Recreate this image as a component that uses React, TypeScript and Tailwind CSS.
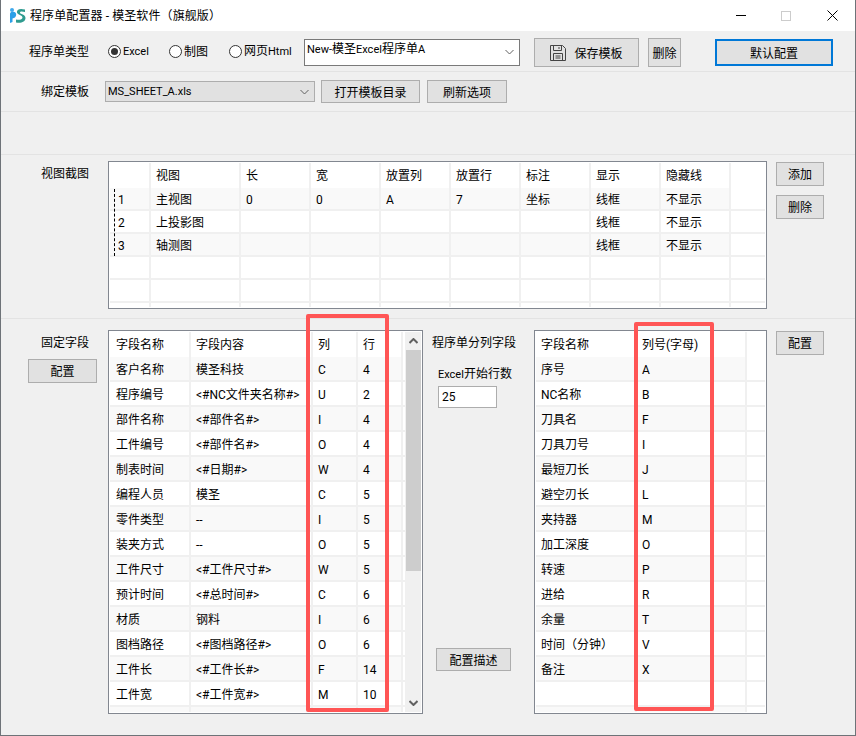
import React from "react";

const font = { fontFamily: 'Roboto, "Noto Sans CJK SC", sans-serif' };

function Btn({ className, children, edge = "border border-[#adadad]" }: { className: string; children: React.ReactNode; edge?: string }) {
  return (
    <div className={"flex items-center justify-center shrink-0 pt-[2px] bg-[#e1e1e1] text-[12px] text-black " + edge + " " + className}>
      {children}
    </div>
  );
}

function Chevron({ className = "", bold = false }: { className?: string; bold?: boolean }) {
  return (
    <svg width="9" height="6" viewBox="0 0 9 6" className={className}>
      <path d="M0.5 1 L4.5 5 L8.5 1" fill="none" stroke="#606060" strokeWidth={bold ? 2 : 1} />
    </svg>
  );
}

function Lat({ children }: { children: React.ReactNode }) {
  return <span className="text-[11px]">{children}</span>;
}

function Radio({ checked, label, width }: { checked?: boolean; label: React.ReactNode; width: string }) {
  return (
    <div className={"flex items-center h-[27px] gap-[2px] shrink-0 " + width}>
      <div className="w-[13px] h-[13px] rounded-full border border-[#333] bg-white flex items-center justify-center shrink-0">
        {checked && <div className="w-[7px] h-[7px] rounded-full bg-[#333]" />}
      </div>
      <span className="text-[12px] text-black whitespace-nowrap">{label}</span>
    </div>
  );
}

const viewRows = [
  ["1", "主视图", "0", "0", "A", "7", "坐标", "线框", "不显示"],
  ["2", "上投影图", "", "", "", "", "", "线框", "不显示"],
  ["3", "轴测图", "", "", "", "", "", "线框", "不显示"],
  ["", "", "", "", "", "", "", "", ""],
  ["", "", "", "", "", "", "", "", ""],
];
const viewHead = ["", "视图", "长", "宽", "放置列", "放置行", "标注", "显示", "隐藏线"];
const viewWidths = ["w-[41px]", "w-[90px]", "w-[70px]", "w-[70px]", "w-[70px]", "w-[70px]", "w-[70px]", "w-[70px]", "w-[70px]"];

const fixedRows = [
  ["客户名称", "模圣科技", "C", "4"],
  ["程序编号", "<#NC文件夹名称#>", "U", "2"],
  ["部件名称", "<#部件名#>", "I", "4"],
  ["工件编号", "<#部件名#>", "O", "4"],
  ["制表时间", "<#日期#>", "W", "4"],
  ["编程人员", "模圣", "C", "5"],
  ["零件类型", "--", "I", "5"],
  ["装夹方式", "--", "O", "5"],
  ["工件尺寸", "<#工件尺寸#>", "W", "5"],
  ["预计时间", "<#总时间#>", "C", "6"],
  ["材质", "钢料", "I", "6"],
  ["图档路径", "<#图档路径#>", "O", "6"],
  ["工件长", "<#工件长#>", "F", "14"],
  ["工件宽", "<#工件宽#>", "M", "10"],
  ["", "", "", ""],
];
const fixedHead = ["字段名称", "字段内容", "列", "行"];
const fixedWidths = ["w-[81px] pl-[6px]", "w-[122px] pl-[5px]", "w-[45px] pl-[5px]", "w-[45px] pl-[5px]"];

const colRows = [
  ["序号", "A"],
  ["NC名称", "B"],
  ["刀具名", "F"],
  ["刀具刀号", "I"],
  ["最短刀长", "J"],
  ["避空刃长", "L"],
  ["夹持器", "M"],
  ["加工深度", "O"],
  ["转速", "P"],
  ["进给", "R"],
  ["余量", "T"],
  ["时间（分钟）", "V"],
  ["备注", "X"],
  ["", ""],
  ["", ""],
];
const colHead = ["字段名称", "列号(字母)"];
const colWidths = ["w-[101px] pl-[5px]", "w-[110px] pl-[5px]"];

function Grid({ head, rows, widths }: { head: string[]; rows: string[][]; widths: string[] }) {
  return (
    <div className="flex-1 min-w-0 h-full overflow-hidden flex flex-col">
      <div className="flex shrink-0 h-[25px]">
        {head.map((h, i) => (
          <div key={i} className={"flex items-center shrink-0 pt-[1px] border-r-2 border-[#f0f0f0] whitespace-nowrap text-[12px] text-black " + widths[i]}>
            {h}
          </div>
        ))}
      </div>
      {rows.map((r, ri) => (
        <div key={ri} className="flex shrink-0 h-[25px] border-b-2 border-[#f0f0f0]">
          <div className={"flex " + (ri % 2 === 0 ? "bg-[#f9f9f9]" : "bg-white")}>
            {r.map((c, i) => (
              <div key={i} className={"flex items-center shrink-0 pt-[2px] border-r-2 border-[#f0f0f0] whitespace-nowrap text-[12px] text-black " + widths[i]}>
                {c}
              </div>
            ))}
          </div>
        </div>
      ))}
    </div>
  );
}

function ViewGrid() {
  return (
    <div className="w-full h-full overflow-hidden flex flex-col relative">
      <div className="flex shrink-0 h-[25px]">
        {viewHead.map((h, i) => (
          <div key={i} className={"flex items-center shrink-0 pl-[5px] border-r-2 border-[#f0f0f0] text-[12px] text-black whitespace-nowrap " + viewWidths[i]}>
            {h}
          </div>
        ))}
      </div>
      {viewRows.map((r, ri) => (
        <div key={ri} className="flex shrink-0 h-[23px] border-b-2 border-[#f0f0f0]">
          <div className={"flex " + (ri % 2 === 0 && ri < 3 ? "bg-[#f9f9f9]" : "bg-white")}>
            {r.map((c, i) => (
              <div key={i} className={"flex items-center shrink-0 pt-[2px] border-r-2 border-[#f0f0f0] text-[12px] text-black whitespace-nowrap " + (i === 0 ? "pl-[8px] " : "pl-[5px] ") + viewWidths[i]}>
                {c}
              </div>
            ))}
          </div>
        </div>
      ))}
      <div className="flex flex-1">
        {viewWidths.map((w, i) => (
          <div key={i} className={"shrink-0 border-r-2 border-[#f0f0f0] " + w} />
        ))}
      </div>
      <div className="absolute left-[4px] top-[26px] h-[67px] border-l border-dashed border-black" />
    </div>
  );
}

export default function App() {
  return (
    <div className="relative w-[856px] h-[736px] overflow-hidden bg-[#f0f0f0] border-x border-b border-[#6e7378]" style={font}>
      {/* title bar */}
      <div className="h-[31px] bg-white flex items-center pl-[8px] pr-[17px]">
        <svg width="17" height="17" viewBox="0 0 17 17" className="shrink-0">
          <circle cx="3" cy="3" r="2" fill="#3fa9ec" />
          <path d="M1 16 V7 C1 5.5 2 5 3 5 C7 4 8.5 8 6 10.5 L3.5 11.5 V15 Z" fill="#2b9fe8" />
          <path d="M16 2.5 C10 1 7.5 3 8 5.5 C8.5 8 13.5 8 13.5 10.5 C13.5 13 9.5 13 7 12.5 V15.5 C12 16.5 16.5 15 16.5 11 C16.5 7 11 7.5 11 5.5 C11 4 14 4.5 16 5 Z" fill="#2f9b8f" />
        </svg>
        <span className="ml-[4px] text-[12px] text-black whitespace-nowrap tracking-[0.1px]">程序单配置器 - 模圣软件（旗舰版）</span>
        <div className="ml-auto flex items-center">
          <div className="w-[10px] h-px bg-black" />
          <div className="ml-[35px] w-[10px] h-[10px] border border-[#cccccc]" />
          <svg width="11" height="11" viewBox="0 0 11 11" className="ml-[36px]">
            <path d="M0.5 0.5 L10.5 10.5 M10.5 0.5 L0.5 10.5" stroke="#000" strokeWidth="1" />
          </svg>
        </div>
      </div>

      {/* row 1 */}
      <div className="h-[41px] flex items-start pt-[7px] border-b border-[#e3e3e3] pl-[28px]">
        <span className="w-[79px] h-[27px] flex items-center shrink-0 text-[12px] text-black">程序单类型</span>
        <Radio checked label={<Lat>Excel</Lat>} width="w-[61px]" />
        <Radio label="制图" width="w-[60px]" />
        <Radio label={<>网页<Lat>Html</Lat></>} width="w-[75px]" />
        <div className="w-[216px] h-[27px] mt-[1px] shrink-0 bg-white border border-[#7a7a7a] flex justify-between pl-[2px] pr-[5px]">
          <span className="text-[12px] leading-[18px] text-black whitespace-nowrap"><Lat>New-</Lat>模圣<Lat>Excel</Lat>程序单<Lat>A</Lat></span>
          <Chevron className="mt-[9px]" />
        </div>
        <Btn className="ml-[14px] w-[105px] h-[29px] gap-[8px]">
          <svg width="16" height="16" viewBox="0 0 16 16" className="-mt-[2px]">
            <path d="M0.5 0.5 H12.5 L15.5 3.5 V15.5 H0.5 Z M3.5 0.5 V5.5 H11.5 V0.5 M9 2 V4 M3.5 15.5 V8.5 H12.5 V15.5 M5.5 11 H10.5 M5.5 13 H10.5" fill="none" stroke="#444" strokeWidth="1" />
          </svg>
          保存模板
        </Btn>
        <Btn className="ml-[9px] w-[33px] h-[29px]">删除</Btn>
        <Btn className="ml-[34px] mt-[1px] w-[118px] h-[27px]" edge="border-[2px] border-[#0078d7]">默认配置</Btn>
      </div>

      {/* row 2 */}
      <div className="h-[40px] flex items-center border-b border-[#e3e3e3] pl-[40px]">
        <span className="w-[64px] shrink-0 text-[12px] text-black">绑定模板</span>
        <div className="w-[210px] h-[21px] shrink-0 bg-[#e1e1e1] border border-[#adadad] flex items-center justify-between pl-[2px] pr-[5px]">
          <span className="text-[11px] pt-[1px] text-black">MS_SHEET_A.xls</span>
          <Chevron />
        </div>
        <Btn className="ml-[6px] w-[99px] h-[23px]">打开模板目录</Btn>
        <Btn className="ml-[7px] w-[80px] h-[23px]">刷新选项</Btn>
      </div>

      {/* empty row */}
      <div className="h-[43px] border-b border-[#e3e3e3]" />

      {/* views */}
      <div className="h-[164px] flex items-start border-b border-[#e3e3e3] pl-[40px] pt-[6px]">
        <span className="w-[67px] mt-[1px] shrink-0 text-[12px] leading-[24px] text-black">视图截图</span>
        <div className="w-[659px] h-[148px] shrink-0 bg-white border border-[#828790] p-px">
          <ViewGrid />
        </div>
        <div className="ml-[9px] flex flex-col gap-[9px] pt-[1px]">
          <Btn className="w-[48px] h-[24px]">添加</Btn>
          <Btn className="w-[48px] h-[24px]">删除</Btn>
        </div>
      </div>

      {/* bottom */}
      <div className="flex items-start pt-[11px] pl-[27px]">
        <div className="w-[80px] shrink-0 flex flex-col items-start">
          <span className="ml-[13px] mt-[1px] text-[12px] leading-[24px] text-black">固定字段</span>
          <Btn className="mt-[4px] w-[69px] h-[24px]">配置</Btn>
        </div>
        <div className="w-[315px] h-[384px] shrink-0 bg-white border border-[#828790] flex p-px">
          <Grid head={fixedHead} rows={fixedRows} widths={fixedWidths} />
          <div className="w-[16px] shrink-0 h-full bg-[#f0f0f0] flex flex-col items-center">
            <div className="h-[18px] flex items-center">
              <Chevron className="rotate-180" bold />
            </div>
            <div className="w-[15px] h-[221px] bg-[#cdcdcd]" />
            <div className="mt-auto h-[18px] flex items-center">
              <Chevron bold />
            </div>
          </div>
        </div>
        <div className="w-[111px] h-[384px] shrink-0 flex flex-col pl-[9px]">
          <span className="mt-[1px] text-[12px] leading-[24px] text-black whitespace-nowrap">程序单分列字段</span>
          <span className="ml-[6px] mt-[9px] text-[12px] leading-[20px] text-black whitespace-nowrap"><Lat>Excel</Lat>开始行数</span>
          <div className="ml-[6px] mt-[1px] w-[59px] h-[22px] bg-white border border-[#adadad] flex items-center pl-[3px] text-[12px] text-black">25</div>
          <Btn className="ml-[4px] mt-[240px] w-[75px] h-[23px]">配置描述</Btn>
        </div>
        <div className="w-[233px] h-[384px] shrink-0 bg-white border border-[#828790] p-px">
          <Grid head={colHead} rows={colRows} widths={colWidths} />
        </div>
        <Btn className="ml-[9px] mt-[1px] w-[48px] h-[24px]">配置</Btn>
      </div>

      {/* red annotations over the UI */}
      <div className="absolute left-[305px] top-[314px] w-[83px] h-[398px] border-[4px] border-[#ff5555] rounded-[2px] pointer-events-none" />
      <div className="absolute left-[633px] top-[322px] w-[80px] h-[389px] border-[4px] border-[#ff5555] rounded-[2px] pointer-events-none" />
    </div>
  );
}
